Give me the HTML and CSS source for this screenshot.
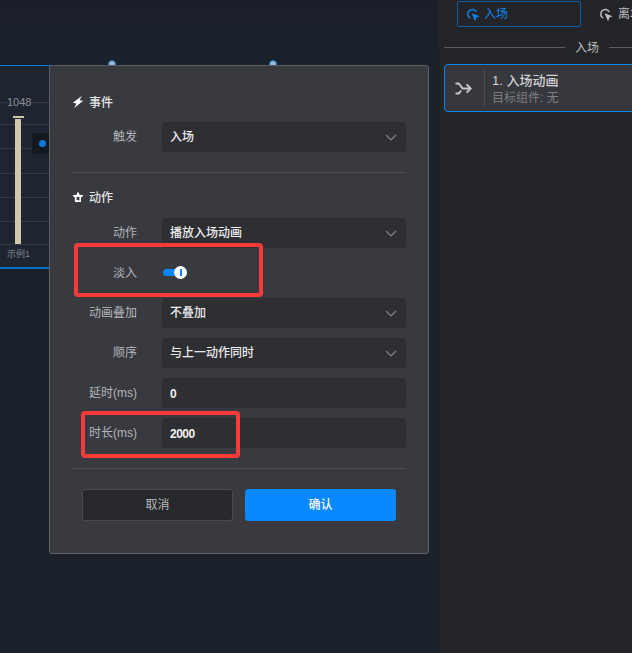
FILE: index.html
```html
<!DOCTYPE html>
<html lang="zh">
<head>
<meta charset="utf-8">
<title>动作</title>
<link rel="stylesheet" href="styles.css">
</head>
<body>
<div class="app">
  <main class="canvas">
    <div class="widget">
      <span class="handle handle-a"></span>
      <span class="handle handle-b"></span>
      <div class="grid-line gl1"></div><div class="grid-line gl2"></div><div class="grid-line gl3"></div><div class="grid-line gl4"></div><div class="grid-line gl5"></div><div class="grid-line gl6"></div><div class="grid-line gl7"></div>
      <span class="bar-value">1048</span>
      <span class="bar-cap"></span>
      <span class="bar"></span>
      <span class="bar-name">示例1</span>
    </div>
    <div class="chip"><span class="chip-dot"></span></div>
  </main>
  <aside class="panel">
    <div class="tabs">
      <div class="tab tab-active">
        <svg class="tab-icon" viewBox="0 0 14 14"><path d="M4.2 10.2A4.6 4.6 0 1 1 10.4 4" fill="none" stroke="currentColor" stroke-width="1.5"/><path d="M5.6 5.2l8 3-3.2 1.3-1.3 3.9z" fill="currentColor"/></svg>
        <span class="tab-text">入场</span>
      </div>
      <div class="tab">
        <svg class="tab-icon" viewBox="0 0 14 14"><path d="M4.2 10.2A4.6 4.6 0 1 1 10.4 4" fill="none" stroke="currentColor" stroke-width="1.5"/><path d="M5.6 5.2l8 3-3.2 1.3-1.3 3.9z" fill="currentColor"/></svg>
        <span class="tab-text">离场</span>
      </div>
    </div>
    <div class="rule-title"><span class="rule"></span><span class="rule-text">入场</span><span class="rule"></span></div>
    <div class="card">
      <div class="card-icon">
        <svg viewBox="0 0 17 13" width="17" height="13"><path d="M0.5 1.5h3.2l4 5h8M0.5 11.5h3.2l2.4-3" fill="none" stroke="currentColor" stroke-width="2"/><path d="M11.6 2.4l4.1 4.1-4.1 4.1" fill="none" stroke="currentColor" stroke-width="2"/></svg>
      </div>
      <div class="card-text">
        <div class="card-title">1. 入场动画</div>
        <div class="card-sub">目标组件: 无</div>
      </div>
    </div>
  </aside>
</div>

<section class="modal">
  <h3 class="section-head section-head-event">
    <svg class="head-icon" viewBox="0 0 12 12"><path d="M9.8 0L0.8 6.8l3.6.7L2.2 12l9-7.2-3.7-.6z" fill="#fff"/></svg>
    <span class="head-text">事件</span>
  </h3>
  <div class="row">
    <label class="label"><span class="label-text">触发</span></label>
    <div class="field"><span class="value">入场</span><svg class="chev" viewBox="0 0 12 7"><path d="M1 1l5 5 5-5" fill="none" stroke="currentColor" stroke-width="1.1"/></svg></div>
  </div>
  <hr class="divider divider-event">
  <h3 class="section-head section-head-action">
    <svg class="head-icon" viewBox="0 0 12 12"><path d="M6 0.5l1.6 3.3 4 .5-2.6 2.4V11H2.9V6.7L.4 4.3l4-.5z" fill="#fff"/><path d="M4.6 6h2.8v3.2H4.6z" fill="#393a40"/></svg>
    <span class="head-text">动作</span>
  </h3>
  <div class="rows">
    <div class="row">
      <label class="label"><span class="label-text">动作</span></label>
      <div class="field"><span class="value">播放入场动画</span><svg class="chev" viewBox="0 0 12 7"><path d="M1 1l5 5 5-5" fill="none" stroke="currentColor" stroke-width="1.1"/></svg></div>
    </div>
    <div class="row">
      <label class="label"><span class="label-text">淡入</span></label>
      <div class="switch-wrap"><span class="switch"><span class="knob"></span></span></div>
    </div>
    <div class="row">
      <label class="label"><span class="label-text">动画叠加</span></label>
      <div class="field"><span class="value">不叠加</span><svg class="chev" viewBox="0 0 12 7"><path d="M1 1l5 5 5-5" fill="none" stroke="currentColor" stroke-width="1.1"/></svg></div>
    </div>
    <div class="row">
      <label class="label"><span class="label-text">顺序</span></label>
      <div class="field"><span class="value">与上一动作同时</span><svg class="chev" viewBox="0 0 12 7"><path d="M1 1l5 5 5-5" fill="none" stroke="currentColor" stroke-width="1.1"/></svg></div>
    </div>
    <div class="row">
      <label class="label"><span class="label-text">延时(ms)</span></label>
      <div class="field"><span class="num">0</span></div>
    </div>
    <div class="row">
      <label class="label"><span class="label-text">时长(ms)</span></label>
      <div class="field"><span class="num">2000</span></div>
    </div>
  </div>
  <hr class="divider divider-action">
  <div class="actions">
    <button class="btn btn-cancel"><span class="btn-text">取消</span></button>
    <button class="btn btn-ok"><span class="btn-text">确认</span></button>
  </div>
</section>

<div class="mark mark-a"></div>
<div class="mark mark-b"></div>
</body>
</html>
```
FILE: styles.css
```css
* { box-sizing: border-box; }
html, body { margin: 0; height: 100%; }
body {
  width: 632px;
  height: 653px;
  overflow: hidden;
  position: relative;
  background: #1a212b;
  font-family: "Liberation Sans", "Noto Sans CJK SC", sans-serif;
  font-size: 12px;
  color: #d0d0d0;
}
.app { display: flex; height: 653px; }
.canvas {
  flex: 0 0 439px;
  position: relative;
  background: linear-gradient(#1b1f29 0, #1a212b 60px);
}
.widget {
  position: absolute;
  left: -20px;
  top: 65px;
  width: 293px;
  height: 204px;
  border-top: 1px solid #0f7ad8;
  border-bottom: 2px solid #0b6fc6;
  background: #1e2531;
}
.handle {
  position: absolute;
  top: -6px;
  width: 8px;
  height: 8px;
  border-radius: 50%;
  background: #9fb8cf;
  border: 1px solid #0a6fc4;
}
.handle-a { left: 128px; }
.handle-b { left: 289px; }
.grid-line { position: absolute; left: 0; right: 0; height: 1px; background: #343a45; }
.gl1 { top: 36px; } .gl2 { top: 58px; } .gl3 { top: 82px; }
.gl4 { top: 107px; } .gl5 { top: 131px; } .gl6 { top: 155px; } .gl7 { top: 178px; }
.bar-value {
  position: absolute; left: 27px; top: 30px; font-size: 11px; line-height: 13px; color: #8d9299;
  background: #1e2531;
}
.bar-cap { position: absolute; left: 33px; top: 50px; width: 11px; height: 2px; background: #cfc6a8; }
.bar { position: absolute; left: 35px; top: 53px; width: 6px; height: 125px; background: #d0c8aa; }
.bar-name { position: absolute; left: 27px; top: 182px; font-size: 9px; line-height: 12px; color: #7d828a; }
.chip {
  position: absolute; left: 32px; top: 133px; width: 30px; height: 21px;
  border-radius: 3px; background: #14181f; display: flex; align-items: center; padding-left: 7px;
}
.chip-dot { width: 7px; height: 7px; border-radius: 50%; background: #0a7bdc; }

.panel {
  flex: 1;
  background: #232427;
  padding: 1px 0 0 5px;
  overflow: hidden;
  min-width: 0;
}
.tabs { display: flex; gap: 20px; padding-left: 13px; white-space: nowrap; }
.tab {
  flex: 0 0 124px; height: 26px; display: flex; align-items: center; gap: 4px; padding-left: 8px;
  border: 1px solid transparent; border-radius: 2px; color: #bdbdbd;
}
.tab-active { border-color: #0b5fa8; color: #0a84ee; }
.tab + .tab { padding-left: 0; margin-left: -3px; gap: 5px; }
.tab-icon { width: 14px; height: 14px; flex: none; margin-top: 2px; }
.tab-text { padding-bottom: 3px; }
.rule-title {
  display: flex; align-items: center; gap: 10px; margin-top: 8px; height: 24px; color: #bdbdbd;
}
.rule { height: 1px; background: #5a5b5e; flex: 1; }
.rule-title .rule:first-child { flex: 0 0 121px; }
.rule-title .rule:last-child { flex: 0 0 40px; }
.rule-text { flex: none; padding-bottom: 2px; }
.card {
  margin-top: 5px; width: 240px; height: 48px; display: flex; align-items: center;
  background: #37383e; border: 1px solid #0d84ea; border-radius: 4px;
}
.card-icon { flex: 0 0 40px; height: 36px; display: flex; align-items: center; justify-content: center; color: #c9c9c9; border-right: 1px solid #4c4d52; padding-right: 3px; }
.card-text { padding: 2px 0 0 7px; }
.card-title { font-size: 13px; line-height: 18px; color: #d2d2d2; font-weight: 500; }
.card-sub { font-size: 12px; line-height: 17px; color: #7d7e82; }

.modal {
  position: absolute;
  left: 49px; top: 65px;
  width: 380px; height: 489px;
  padding: 0 22px;
  background: #393a40;
  border: 1px solid #5f6064;
  border-radius: 3px;
  display: flex; flex-direction: column;
}
.section-head {
  margin: 0; display: flex; align-items: center; gap: 5px;
  font-size: 12px; line-height: 16px; font-weight: 500; color: #e6e6e6;
}
.section-head-event { margin-top: 28px; margin-bottom: 12px; }
.section-head-action { margin-bottom: 13px; }
.head-icon { width: 12px; height: 12px; flex: none; }
.head-text { position: relative; top: 1px; }
.row { display: flex; align-items: center; height: 30px; }
.rows { display: flex; flex-direction: column; gap: 10px; }
.label { flex: 0 0 90px; padding-right: 25px; text-align: right; color: #b4b5b8; white-space: nowrap; font-size: 12px; }
.label-text { display: block; padding-bottom: 4px; }
.field {
  flex: 1; height: 30px; display: flex; align-items: center; justify-content: space-between;
  padding: 0 9px 0 8px; background: #2e2f33; border-radius: 3px; color: #ececec;
}
.value { display: block; padding-bottom: 4px; font-weight: 500; }
.num { display: block; padding-top: 2px; font-weight: 700; font-size: 12px; letter-spacing: -0.5px; color: #f2f2f2; }
.chev { width: 12px; height: 7px; color: #85868a; }
.switch-wrap { flex: 1; display: flex; align-items: center; padding: 0 0 1px 1px; }
.switch { position: relative; width: 24px; height: 7px; border-radius: 4px; background: #0a84ff; }
.knob {
  position: absolute; right: 0; top: -3px; width: 13px; height: 13px; border-radius: 50%; background: #fff;
}
.knob::after { content: ""; position: absolute; left: 5.5px; top: 3px; width: 2px; height: 7px; background: #0a84ff; }
.divider { border: 0; height: 1px; background: #4c4d52; margin: 0; }
.divider-event { margin-top: 20px; margin-bottom: 16px; }
.divider-action { margin-top: 20px; }
.actions { display: flex; gap: 12px; padding: 20px 10px 0; }
.btn {
  flex: 1; height: 32px; border-radius: 3px; font-family: inherit; font-size: 12px; padding: 0;
}
.btn-text { display: block; padding-bottom: 4px; }
.btn-cancel { background: #27282b; border: 1px solid #4a4b50; color: #b9babc; }
.btn-ok { background: #0a88ff; border: 1px solid #0a88ff; color: #fff; font-weight: 500; }

.mark { position: absolute; border: 4px solid #f73a3a; border-radius: 4px; }
.mark-a { left: 74px; top: 243px; width: 189px; height: 54px; }
.mark-b { left: 81px; top: 411px; width: 159px; height: 47px; }
```
